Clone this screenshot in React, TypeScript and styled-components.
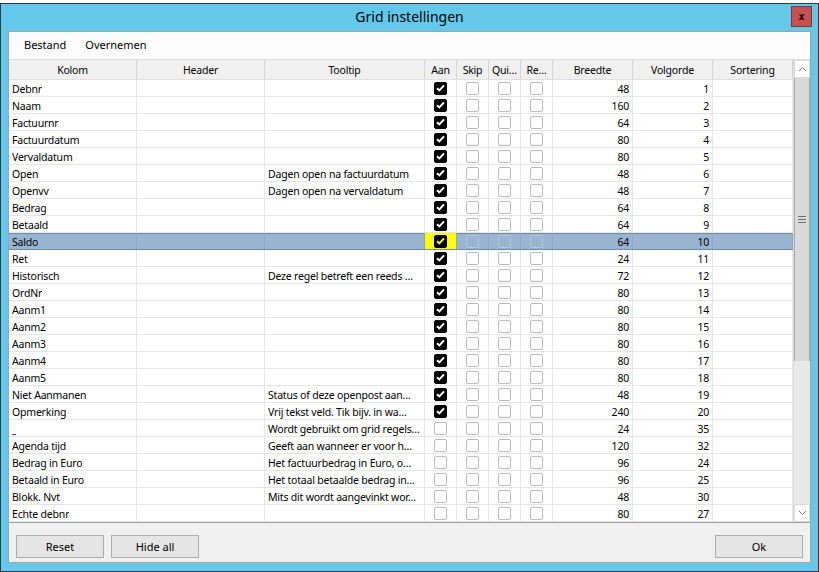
import styled, { createGlobalStyle } from 'styled-components';

type Row = {
    kolom: string;
    tooltip?: string;
    aan: boolean;
    breedte: number;
    volgorde: number;
};

const rows: Row[] = [
    { kolom: 'Debnr', aan: true, breedte: 48, volgorde: 1 },
    { kolom: 'Naam', aan: true, breedte: 160, volgorde: 2 },
    { kolom: 'Factuurnr', aan: true, breedte: 64, volgorde: 3 },
    { kolom: 'Factuurdatum', aan: true, breedte: 80, volgorde: 4 },
    { kolom: 'Vervaldatum', aan: true, breedte: 80, volgorde: 5 },
    { kolom: 'Open', tooltip: 'Dagen open na factuurdatum', aan: true, breedte: 48, volgorde: 6 },
    { kolom: 'Openvv', tooltip: 'Dagen open na vervaldatum', aan: true, breedte: 48, volgorde: 7 },
    { kolom: 'Bedrag', aan: true, breedte: 64, volgorde: 8 },
    { kolom: 'Betaald', aan: true, breedte: 64, volgorde: 9 },
    { kolom: 'Saldo', aan: true, breedte: 64, volgorde: 10 },
    { kolom: 'Ret', aan: true, breedte: 24, volgorde: 11 },
    { kolom: 'Historisch', tooltip: 'Deze regel betreft een reeds …', aan: true, breedte: 72, volgorde: 12 },
    { kolom: 'OrdNr', aan: true, breedte: 80, volgorde: 13 },
    { kolom: 'Aanm1', aan: true, breedte: 80, volgorde: 14 },
    { kolom: 'Aanm2', aan: true, breedte: 80, volgorde: 15 },
    { kolom: 'Aanm3', aan: true, breedte: 80, volgorde: 16 },
    { kolom: 'Aanm4', aan: true, breedte: 80, volgorde: 17 },
    { kolom: 'Aanm5', aan: true, breedte: 80, volgorde: 18 },
    { kolom: 'Niet Aanmanen', tooltip: 'Status of deze openpost aan…', aan: true, breedte: 48, volgorde: 19 },
    { kolom: 'Opmerking', tooltip: 'Vrij tekst veld. Tik bijv. in wa…', aan: true, breedte: 240, volgorde: 20 },
    { kolom: '_', tooltip: 'Wordt gebruikt om grid regels…', aan: false, breedte: 24, volgorde: 35 },
    { kolom: 'Agenda tijd', tooltip: 'Geeft aan wanneer er voor h…', aan: false, breedte: 120, volgorde: 32 },
    { kolom: 'Bedrag in Euro', tooltip: 'Het factuurbedrag in Euro, o…', aan: false, breedte: 96, volgorde: 24 },
    { kolom: 'Betaald in Euro', tooltip: 'Het totaal betaalde bedrag in…', aan: false, breedte: 96, volgorde: 25 },
    { kolom: 'Blokk. Nvt', tooltip: 'Mits dit wordt aangevinkt wor…', aan: false, breedte: 48, volgorde: 30 },
    { kolom: 'Echte debnr', aan: false, breedte: 80, volgorde: 27 },
];

const SELECTED = 9;
const COLS = '128px 128px 160px 32px 32px 32px 32px 80px 80px 80px';

const GlobalStyle = createGlobalStyle`
    html, body {
        margin: 0;
        background: #ffffff;
        font-family: 'Noto Sans', 'Liberation Sans', sans-serif;
        font-size: 11px;
        color: #000;
    }
`;

const Desktop = styled.div`
    width: 819px;
    height: 572px;
    padding-top: 3px;
    box-sizing: border-box;
    background: #ffffff;
`;

const Window = styled.div`
    height: 569px;
    box-sizing: border-box;
    border: 1px solid #2f3a40;
    background: #63c8ea;
    display: flex;
    flex-direction: column;
    padding: 0 7px 8px 7px;
`;

const TitleBar = styled.div`
    height: 27px;
    flex: none;
    position: relative;
    display: flex;
    align-items: center;
    justify-content: center;
    font-size: 14px;
    color: #000;
    padding-bottom: 3px;
    box-sizing: border-box;
`;

const CloseButton = styled.div`
    position: absolute;
    right: -1px;
    top: 2px;
    width: 19px;
    height: 19px;
    background: #c75050;
    border: 1px solid #7a3a3a;
    display: flex;
    align-items: center;
    justify-content: center;
    font-family: 'DejaVu Sans Mono', monospace;
    font-weight: bold;
    font-size: 10px;
    line-height: 1;
    color: #000;
`;

const Client = styled.div`
    flex: 1;
    border: 1px solid #a3a3a3;
    background: #f0f0f0;
    display: flex;
    flex-direction: column;
    min-height: 0;
`;

const MenuBar = styled.div`
    height: 28px;
    flex: none;
    background: #fcfcfc;
    border-bottom: 1px solid #dadada;
    box-sizing: border-box;
    display: flex;
    align-items: center;
    padding: 0 0 3px 8px;
    gap: 5px;
`;

const MenuItem = styled.span`
    padding: 2px 7px;
`;

const GridArea = styled.div`
    display: flex;
    height: 463px;
    flex: none;
    background: #fff;
    border-bottom: 1px solid #a0a0a0;
    box-sizing: border-box;
    font-size: 10.5px;
    letter-spacing: -0.2px;
`;

const Table = styled.div`
    width: 784px;
    display: flex;
    flex-direction: column;
`;

const HeaderRow = styled.div`
    display: grid;
    grid-template-columns: ${COLS};
    height: 20px;
    background: #f0f0f0;
    border-bottom: 1px solid #e0e0e0;
    box-sizing: border-box;
`;

const HeaderCell = styled.div`
    border-right: 1px solid #d5d5d5;
    display: flex;
    align-items: center;
    justify-content: center;
    padding-top: 1px;
    white-space: nowrap;
    overflow: hidden;
`;

const BodyRow = styled.div<{ $selected?: boolean }>`
    display: grid;
    grid-template-columns: ${COLS};
    height: 17px;
    box-sizing: border-box;
    background: ${(p) => (p.$selected ? '#99b4d1' : '#ffffff')};
    border-bottom: 1px solid ${(p) => (p.$selected ? '#6f8bab' : '#e6e6e6')};
    ${(p) => (p.$selected ? 'box-shadow: inset 0 1px 0 #6f8bab;' : '')}
`;

const Cell = styled.div<{ $align?: 'left' | 'right' | 'center'; $selected?: boolean; $mark?: boolean }>`
    border-right: 1px solid ${(p) => (p.$selected ? '#8ba4c0' : '#e6e6e6')};
    display: flex;
    align-items: center;
    justify-content: ${(p) => (p.$align === 'right' ? 'flex-end' : p.$align === 'center' ? 'center' : 'flex-start')};
    padding-left: ${(p) => (p.$align === 'left' ? '3px' : '0')};
    padding-right: ${(p) => (p.$align === 'right' ? '3px' : '0')};
    padding-top: ${(p) => (p.$align === 'center' ? '0' : '2px')};
    white-space: nowrap;
    overflow: hidden;
    background: ${(p) => (p.$mark ? '#ffff00' : 'transparent')};
    min-width: 0;
`;

const CellText = styled.span`
    overflow: hidden;
    text-overflow: ellipsis;
`;

const Box = styled.span<{ $checked: boolean; $selected?: boolean }>`
    width: 13px;
    height: 13px;
    box-sizing: border-box;
    border-radius: 2px;
    border: 1px solid ${(p) => (p.$checked ? '#000' : p.$selected ? '#b4c6da' : '#bcbcbc')};
    background: ${(p) => (p.$checked ? '#000' : 'transparent')};
    display: flex;
    align-items: center;
    justify-content: center;
`;

const ScrollBar = styled.div`
    width: 17px;
    display: flex;
    flex-direction: column;
    background: #e8e8e8;
    border-left: 1px solid #dcdcdc;
    box-sizing: border-box;
`;

const ArrowButton = styled.div`
    height: 18px;
    flex: none;
    background: #fff;
    border: 1px solid #dadada;
    box-sizing: border-box;
    display: flex;
    align-items: center;
    justify-content: center;
`;

const Track = styled.div`
    flex: 1;
    display: flex;
    flex-direction: column;
`;

const Thumb = styled.div`
    height: 283px;
    background: #dadada;
    border-left: 1px solid #a8a8a8;
    border-right: 1px solid #a8a8a8;
    display: flex;
    align-items: center;
    justify-content: center;
`;

const Grip = styled.div`
    width: 8px;
    height: 7px;
    background: repeating-linear-gradient(to bottom, #6e6e6e 0 1px, transparent 1px 3px);
`;

const ButtonBar = styled.div`
    flex: 1;
    display: flex;
    align-items: flex-start;
    padding: 12px 7px 0 7px;
    gap: 7px;
    background: #f0f0f0;
`;

const Button = styled.div<{ $push?: boolean }>`
    width: 88px;
    height: 23px;
    box-sizing: border-box;
    border: 1px solid #adadad;
    background: #e5e5e5;
    display: flex;
    align-items: center;
    justify-content: center;
    margin-left: ${(p) => (p.$push ? 'auto' : '0')};
`;

const Check = ({ color }: { color: string }) => (
    <svg width="9" height="8" viewBox="0 0 9 8">
        <path d="M1 4.2 L3.4 6.4 L8 1.4" fill="none" stroke={color} strokeWidth="2" />
    </svg>
);

const Chevron = ({ up }: { up: boolean }) => (
    <svg width="9" height="6" viewBox="0 0 9 6">
        <path d={up ? 'M1 5 L4.5 1.5 L8 5' : 'M1 1 L4.5 4.5 L8 1'} fill="none" stroke="#7a7a7a" strokeWidth="1" />
    </svg>
);

const headers = ['Kolom', 'Header', 'Tooltip', 'Aan', 'Skip', 'Qui…', 'Re…', 'Breedte', 'Volgorde', 'Sortering'];

export default function App() {
    return (
        <>
            <GlobalStyle />
            <Desktop>
                <Window>
                    <TitleBar>
                        Grid instellingen
                        <CloseButton>x</CloseButton>
                    </TitleBar>
                    <Client>
                        <MenuBar>
                            <MenuItem>Bestand</MenuItem>
                            <MenuItem>Overnemen</MenuItem>
                        </MenuBar>
                        <GridArea>
                            <Table>
                                <HeaderRow>
                                    {headers.map((h) => (
                                        <HeaderCell key={h}>{h}</HeaderCell>
                                    ))}
                                </HeaderRow>
                                {rows.map((r, i) => {
                                    const sel = i === SELECTED;
                                    return (
                                        <BodyRow key={r.kolom + i} $selected={sel}>
                                            <Cell $align="left" $selected={sel}>
                                                <CellText>{r.kolom}</CellText>
                                            </Cell>
                                            <Cell $align="left" $selected={sel} />
                                            <Cell $align="left" $selected={sel}>
                                                <CellText>{r.tooltip ?? ''}</CellText>
                                            </Cell>
                                            <Cell $align="center" $selected={sel} $mark={sel}>
                                                <Box $checked={r.aan}>
                                                    {r.aan && <Check color={sel ? '#ffff00' : '#ffffff'} />}
                                                </Box>
                                            </Cell>
                                            {[0, 1, 2].map((k) => (
                                                <Cell key={k} $align="center" $selected={sel}>
                                                    <Box $checked={false} $selected={sel} />
                                                </Cell>
                                            ))}
                                            <Cell $align="right" $selected={sel}>
                                                {r.breedte}
                                            </Cell>
                                            <Cell $align="right" $selected={sel}>
                                                {r.volgorde}
                                            </Cell>
                                            <Cell $align="left" $selected={sel} />
                                        </BodyRow>
                                    );
                                })}
                            </Table>
                            <ScrollBar>
                                <ArrowButton>
                                    <Chevron up />
                                </ArrowButton>
                                <Track>
                                    <Thumb>
                                        <Grip />
                                    </Thumb>
                                </Track>
                                <ArrowButton>
                                    <Chevron up={false} />
                                </ArrowButton>
                            </ScrollBar>
                        </GridArea>
                        <ButtonBar>
                            <Button>Reset</Button>
                            <Button>Hide all</Button>
                            <Button $push>Ok</Button>
                        </ButtonBar>
                    </Client>
                </Window>
            </Desktop>
        </>
    );
}
